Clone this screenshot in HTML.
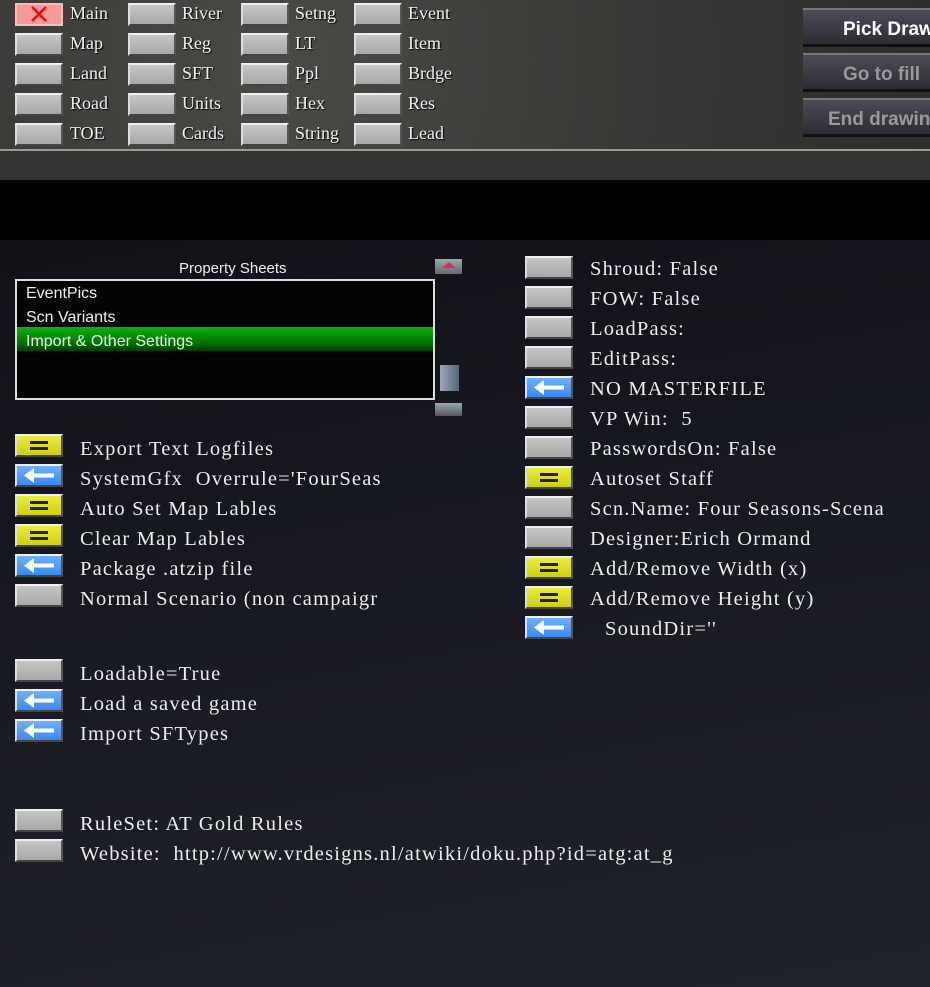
<!DOCTYPE html>
<html><head><meta charset="utf-8"><style>
*{margin:0;padding:0;box-sizing:border-box}
body{width:930px;height:987px;overflow:hidden;position:relative;background:linear-gradient(170deg,#0c0d12 0%,#15161d 40%,#20222b 100%);font-family:"Liberation Serif",serif;color:#ececec}
.top{position:absolute;left:0;top:0;width:930px;height:150px;background:radial-gradient(circle at 30% 40%,#4a4a47,#363634 60%,#2e2e2c);}
.line{position:absolute;left:0;top:149px;width:930px;height:2px;background:#9a9a96}
.mid{position:absolute;left:0;top:151px;width:930px;height:29px;background:#333331}
.blk{position:absolute;left:0;top:180px;width:930px;height:60px;background:#000}
.b{position:absolute;width:48px;height:23px;background:linear-gradient(#c6c6c6,#a8a8a8);border-top:2px solid #eee;border-left:2px solid #ddd;border-right:2px solid #555;border-bottom:2px solid #444}
.y{background:linear-gradient(#ecec40,#cfcf10)}
.y::after{content:"";position:absolute;left:13px;top:5px;width:18px;height:3px;background:#222;box-shadow:0 6px 0 #222}
.bl{background:linear-gradient(#6cb0ff,#3a88f0)}
.bl svg{position:absolute;left:0;top:0}
.t{position:absolute;font-size:18px;color:#eee;text-shadow:1px 1px 1px #000;white-space:nowrap}
.l{position:absolute;font-size:20.5px;white-space:pre;line-height:24px;letter-spacing:1.2px}
.rb{position:absolute;left:803px;width:140px;height:39px;background:linear-gradient(#4c4c58,#2c2c34);border-top:2px solid #777;border-bottom:3px solid #111;font:bold 19px "Liberation Sans",sans-serif;padding:9px 0 0 40px;white-space:nowrap}
.s{position:absolute;font:15px "Liberation Sans",sans-serif;color:#eee;white-space:nowrap}
</style></head><body>
<div class="top"></div><div class="line"></div><div class="mid"></div><div class="blk"></div>

<div class="b" style="left:15px;top:3px;background:#f49a9a;border-color:#f8bbbb"><svg width="44" height="19" style="position:absolute;left:0;top:0"><path d="M15 2 L29 16 M29 2 L15 16" stroke="#f00" stroke-width="2.5"/></svg></div>
<div class="t" style="left:70px;top:3px">Main</div>
<div class="b" style="left:15px;top:33px"></div><div class="t" style="left:70px;top:33px">Map</div>
<div class="b" style="left:15px;top:63px"></div><div class="t" style="left:70px;top:63px">Land</div>
<div class="b" style="left:15px;top:93px"></div><div class="t" style="left:70px;top:93px">Road</div>
<div class="b" style="left:15px;top:123px"></div><div class="t" style="left:70px;top:123px">TOE</div>
<div class="b" style="left:128px;top:3px"></div><div class="t" style="left:182px;top:3px">River</div>
<div class="b" style="left:128px;top:33px"></div><div class="t" style="left:182px;top:33px">Reg</div>
<div class="b" style="left:128px;top:63px"></div><div class="t" style="left:182px;top:63px">SFT</div>
<div class="b" style="left:128px;top:93px"></div><div class="t" style="left:182px;top:93px">Units</div>
<div class="b" style="left:128px;top:123px"></div><div class="t" style="left:182px;top:123px">Cards</div>
<div class="b" style="left:241px;top:3px"></div><div class="t" style="left:295px;top:3px">Setng</div>
<div class="b" style="left:241px;top:33px"></div><div class="t" style="left:295px;top:33px">LT</div>
<div class="b" style="left:241px;top:63px"></div><div class="t" style="left:295px;top:63px">Ppl</div>
<div class="b" style="left:241px;top:93px"></div><div class="t" style="left:295px;top:93px">Hex</div>
<div class="b" style="left:241px;top:123px"></div><div class="t" style="left:295px;top:123px">String</div>
<div class="b" style="left:354px;top:3px"></div><div class="t" style="left:408px;top:3px">Event</div>
<div class="b" style="left:354px;top:33px"></div><div class="t" style="left:408px;top:33px">Item</div>
<div class="b" style="left:354px;top:63px"></div><div class="t" style="left:408px;top:63px">Brdge</div>
<div class="b" style="left:354px;top:93px"></div><div class="t" style="left:408px;top:93px">Res</div>
<div class="b" style="left:354px;top:123px"></div><div class="t" style="left:408px;top:123px">Lead</div>

<div class="rb" style="top:8px;color:#fff">Pick Draw</div>
<div class="rb" style="top:53px;color:#999">Go to fill</div>
<div class="rb" style="top:98px;color:#999;padding-left:25px">End drawing</div>

<div class="s" style="left:179px;top:260px">Property Sheets</div>
<div style="position:absolute;left:15px;top:279px;width:420px;height:121px;border:2px solid #ddd;background:#030303"></div>
<div style="position:absolute;left:17px;top:327px;width:416px;height:24px;background:linear-gradient(#10b010,#007000 70%,#003a00)"></div>
<div class="s" style="left:26px;top:285px;font-size:16px">EventPics</div>
<div class="s" style="left:26px;top:309px;font-size:16px">Scn Variants</div>
<div class="s" style="left:26px;top:333px;font-size:16px">Import &amp; Other Settings</div>
<div style="position:absolute;left:435px;top:259px;width:27px;height:15px;background:linear-gradient(#9aa,#667)"><div style="position:absolute;left:7px;top:3px;border-left:7px solid transparent;border-right:7px solid transparent;border-bottom:6px solid #d33"></div></div>
<div style="position:absolute;left:440px;top:365px;width:19px;height:26px;background:linear-gradient(90deg,#9ab,#567)"></div>
<div style="position:absolute;left:435px;top:403px;width:27px;height:13px;background:linear-gradient(#9aa,#556)"></div>

<svg width="0" height="0" style="position:absolute"><defs><g id="ar"><polygon points="7,9.5 17,2 17,17" fill="#fff"/><rect x="15" y="7.5" width="22" height="4" fill="#fff"/></g></defs></svg>

<div class="b y" style="left:15px;top:434px"></div><div class="l" style="left:80px;top:437px">Export Text Logfiles</div>
<div class="b bl" style="left:15px;top:464px"><svg width="44" height="19"><use href="#ar"/></svg></div><div class="l" style="left:80px;top:467px">SystemGfx  Overrule='FourSeas</div>
<div class="b y" style="left:15px;top:494px"></div><div class="l" style="left:80px;top:497px">Auto Set Map Lables</div>
<div class="b y" style="left:15px;top:524px"></div><div class="l" style="left:80px;top:527px">Clear Map Lables</div>
<div class="b bl" style="left:15px;top:554px"><svg width="44" height="19"><use href="#ar"/></svg></div><div class="l" style="left:80px;top:557px">Package .atzip file</div>
<div class="b" style="left:15px;top:584px"></div><div class="l" style="left:80px;top:587px">Normal Scenario (non campaigr</div>
<div class="b" style="left:15px;top:659px"></div><div class="l" style="left:80px;top:662px">Loadable=True</div>
<div class="b bl" style="left:15px;top:689px"><svg width="44" height="19"><use href="#ar"/></svg></div><div class="l" style="left:80px;top:692px">Load a saved game</div>
<div class="b bl" style="left:15px;top:719px"><svg width="44" height="19"><use href="#ar"/></svg></div><div class="l" style="left:80px;top:722px">Import SFTypes</div>
<div class="b" style="left:15px;top:809px"></div><div class="l" style="left:80px;top:812px">RuleSet: AT Gold Rules</div>
<div class="b" style="left:15px;top:839px"></div><div class="l" style="left:80px;top:842px">Website:  http://www.vrdesigns.nl/atwiki/doku.php?id=atg:at_g</div>

<div class="b" style="left:525px;top:256px"></div><div class="l" style="left:590px;top:257px">Shroud: False</div>
<div class="b" style="left:525px;top:286px"></div><div class="l" style="left:590px;top:287px">FOW: False</div>
<div class="b" style="left:525px;top:316px"></div><div class="l" style="left:590px;top:317px">LoadPass:</div>
<div class="b" style="left:525px;top:346px"></div><div class="l" style="left:590px;top:347px">EditPass:</div>
<div class="b bl" style="left:525px;top:376px"><svg width="44" height="19"><use href="#ar"/></svg></div><div class="l" style="left:590px;top:377px">NO MASTERFILE</div>
<div class="b" style="left:525px;top:406px"></div><div class="l" style="left:590px;top:407px">VP Win:  5</div>
<div class="b" style="left:525px;top:436px"></div><div class="l" style="left:590px;top:437px">PasswordsOn: False</div>
<div class="b y" style="left:525px;top:466px"></div><div class="l" style="left:590px;top:467px">Autoset Staff</div>
<div class="b" style="left:525px;top:496px"></div><div class="l" style="left:590px;top:497px">Scn.Name: Four Seasons-Scena</div>
<div class="b" style="left:525px;top:526px"></div><div class="l" style="left:590px;top:527px">Designer:Erich Ormand</div>
<div class="b y" style="left:525px;top:556px"></div><div class="l" style="left:590px;top:557px">Add/Remove Width (x)</div>
<div class="b y" style="left:525px;top:586px"></div><div class="l" style="left:590px;top:587px">Add/Remove Height (y)</div>
<div class="b bl" style="left:525px;top:616px"><svg width="44" height="19"><use href="#ar"/></svg></div><div class="l" style="left:605px;top:617px">SoundDir=''</div>
</body></html>
